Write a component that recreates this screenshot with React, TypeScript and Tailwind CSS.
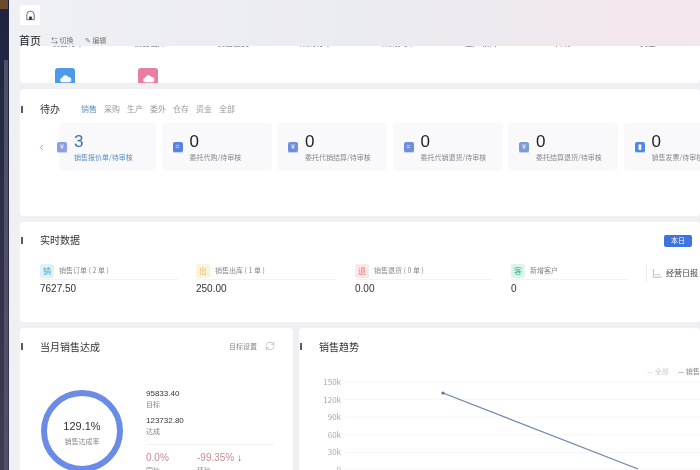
import { ChevronLeft, RefreshCw } from "lucide-react";

type Todo = { count: string; label: string; color: string; glyph: string; active?: boolean };

const todos: Todo[] = [
  { count: "3", label: "销售报价单/待审核", color: "bg-[#8b9fe0]", glyph: "¥", active: true },
  { count: "0", label: "委托代购/待审核", color: "bg-[#5b82dc]", glyph: "=" },
  { count: "0", label: "委托代销结算/待审核", color: "bg-[#6f8fdc]", glyph: "¥" },
  { count: "0", label: "委托代销退货/待审核", color: "bg-[#6f8fdc]", glyph: "=" },
  { count: "0", label: "委托结算退货/待审核", color: "bg-[#7f9ad8]", glyph: "¥" },
  { count: "0", label: "销售发票/待审核", color: "bg-[#4a8be0]", glyph: "▮" },
];

const realtime = [
  { glyph: "销", tint: "bg-[#dff1fb] text-[#4aa3c8]", label: "销售订单 ( 2 单 )", value: "7627.50", width: "w-[138px] mr-[18px]" },
  { glyph: "出", tint: "bg-[#fdf3dc] text-[#e9bc5c]", label: "销售出库 ( 1 单 )", value: "250.00", width: "w-[140px] mr-[19px]" },
  { glyph: "退", tint: "bg-[#fde8e8] text-[#e07a7a]", label: "销售退货 ( 0 单 )", value: "0.00", width: "w-[138px] mr-[18px]" },
  { glyph: "客", tint: "bg-[#dcf5ea] text-[#3fb58a]", label: "新增客户", value: "0", width: "w-[117px] mr-[18px]" },
];

const topLabels = [
  { label: "销售订单", w: "w-[82px]" },
  { label: "销售出库", w: "w-[83px]" },
  { label: "销售退货", w: "w-[83px]" },
  { label: "采购订单", w: "w-[82px]" },
  { label: "采购入库", w: "w-[83px]" },
  { label: "生产领料", w: "w-[91px]" },
  { label: "库存", w: "w-[84px]" },
  { label: "资金", w: "w-[40px]" },
];

const latin = { fontFamily: '"Liberation Sans", sans-serif' };

function Marker() {
  return <span className="absolute left-[1px] h-[7px] w-[2px] bg-[#555a66]" />;
}

function CloudTile({ color }: { color: string }) {
  return (
    <div className={`flex h-[20px] w-[20px] items-center justify-center rounded-t-[3px] ${color}`}>
      <svg viewBox="0 0 16 12" className="h-[9px] w-[13px]" fill="#fff">
        <path d="M4 11a3 3 0 0 1-.4-6A4.5 4.5 0 0 1 12 4a3.5 3.5 0 0 1 .5 7z" />
      </svg>
    </div>
  );
}

export default function App() {
  return (
    <div
      className="flex h-[470px] w-[700px] overflow-hidden bg-[#eff0f4] text-[#333] blur-[0.4px]"
      style={{ fontFamily: '"Noto Sans CJK SC", "Liberation Sans", sans-serif' }}
    >
      <aside className="relative w-[9px] shrink-0 bg-gradient-to-b from-[#1f2240] to-[#3d3e52]">
        <div className="h-[9px] w-[8px] bg-[#6b4a2c]" />
        <div className="absolute bottom-0 right-[1px] top-[60px] w-[4px] bg-[#50506a]" />
      </aside>

      <main className="min-w-0 flex-1">
        <header className="h-[46px] bg-gradient-to-r from-[#eff0f5] via-[#ebebf2] to-[#f3e6ec] pl-[11px] pt-[5px]">
          <div className="flex h-[20px] w-[20px] items-center justify-center rounded-[2px] bg-white">
            <svg viewBox="0 0 12 12" className="h-[11px] w-[11px]" fill="none" stroke="#5a6070" strokeWidth="1">
              <path d="M2 10.5V5.2a4 4 0 0 1 8 0v5.3z" />
              <rect x="4.6" y="7.2" width="2.8" height="3.3" fill="#222" stroke="none" />
            </svg>
          </div>
          <div className="mt-[8px] flex items-center">
            <span className="-ml-[1px] text-[11px] leading-[15px] text-[#222]">首页</span>
            <span className="ml-[10px] text-[7px] text-[#777]">⇆ 切换</span>
            <span className="ml-[11px] text-[7px] text-[#777]">✎ 编辑</span>
          </div>
        </header>

        <div className="flex flex-col gap-[6px] pl-[11px]">
          <section className="relative flex h-[37px] overflow-hidden rounded-b-[4px] bg-white pl-[32px]">
            {topLabels.map((t) => (
              <div key={t.label} className={`${t.w} shrink-0`}>
                <div className="mt-[-9px] h-[12px] text-[8px] leading-[12px] text-[#666]">{t.label}</div>
              </div>
            ))}
            <div className="absolute left-[35px] top-[22px]">
              <CloudTile color="bg-[#4d9be8]" />
            </div>
            <div className="absolute left-[118px] top-[22px]">
              <CloudTile color="bg-[#ea7ea0]" />
            </div>
          </section>

          <section className="relative h-[127px] overflow-hidden rounded-[4px] bg-white pt-[13px]">
            <div className="relative flex h-[14px] items-center pl-[20px]">
              <Marker />
              <span className="-mt-[2px] w-[41px] text-[10px] text-[#333]">待办</span>
              <div className="flex gap-[7px] text-[8px]">
                <span className="text-[#5b8fc0]">销售</span>
                <span className="text-[#999]">采购</span>
                <span className="text-[#999]">生产</span>
                <span className="text-[#999]">委外</span>
                <span className="text-[#999]">仓存</span>
                <span className="text-[#999]">资金</span>
                <span className="text-[#999]">全部</span>
              </div>
            </div>
            <div className="mt-[7px] flex items-center">
              <ChevronLeft size={9} className="ml-[17px] mr-[13px] shrink-0 text-[#888]" />
              <div className="flex gap-[5.5px]">
                {todos.map((t, i) => (
                  <div
                    key={t.label}
                    className={`flex h-[48px] shrink-0 items-center rounded-[4px] bg-[#f9f9fc] ${i === 0 ? "w-[97px]" : "w-[110px] pl-[11px]"}`}
                  >
                    <span
                      className={`flex h-[11px] w-[10px] shrink-0 items-center justify-center rounded-[2px] border-b border-[#c5d3f3] text-[7px] leading-none text-white ${t.color} ${i === 0 ? "-ml-[2px]" : ""}`}
                    >
                      {t.glyph}
                    </span>
                    <div className="ml-[7px]">
                      <div className={`text-[17px] leading-[20px] ${t.active ? "text-[#3f6fb5]" : "text-[#222]"}`} style={latin}>
                        {t.count}
                      </div>
                      <div className={`whitespace-nowrap text-[7px] leading-[11px] ${t.active ? "text-[#5b8fc0]" : "text-[#888]"}`}>{t.label}</div>
                    </div>
                  </div>
                ))}
              </div>
            </div>
          </section>

          <section className="relative h-[100px] overflow-hidden rounded-[4px] bg-white pt-[10px]">
            <div className="relative flex h-[16px] items-center pl-[20px] pr-[8px]">
              <Marker />
              <span className="-mt-[2px] text-[10px] text-[#333]">实时数据</span>
              <span className="ml-auto mt-[1px] flex h-[12px] w-[28px] items-center justify-center rounded-[2px] bg-[#3f74dc] text-[7px] text-white">本日</span>
            </div>
            <div className="mt-[16px] flex pl-[20px]">
              {realtime.map((r) => (
                <div key={r.label} className={`${r.width} shrink-0`}>
                  <div className="flex h-[16px] items-center border-b border-[#f2f2f4] pb-[2px]">
                    <span className={`flex h-[14px] w-[14px] items-center justify-center rounded-[2px] text-[8px] ${r.tint}`}>{r.glyph}</span>
                    <span className="ml-[5px] text-[7px] text-[#888]">{r.label}</span>
                  </div>
                  <div className="mt-[2px] text-[10px] leading-[14px] text-[#333]" style={latin}>
                    {r.value}
                  </div>
                </div>
              ))}
              <div className="flex h-[18px] shrink-0 items-center gap-[3px] whitespace-nowrap border-l border-[#eee] pl-[5px] text-[8px] text-[#444]">
                <svg viewBox="0 0 12 12" className="h-[10px] w-[11px]" fill="none" stroke="#999" strokeWidth="0.8">
                  <path d="M1 1v10h10M3 8h2M6 8h3" />
                </svg>
                经营日报
              </div>
            </div>
          </section>

          <div className="flex gap-[6px]">
            <section className="relative h-[160px] w-[273px] shrink-0 rounded-[4px] bg-white pt-[10px]">
              <div className="relative flex h-[16px] items-center pl-[20px] pr-[18px]">
                <Marker />
                <span className="text-[10px] text-[#333]">当月销售达成</span>
                <span className="ml-auto text-[7px] text-[#888]">目标设置</span>
                <RefreshCw size={10} className="ml-[8px] text-[#bbb]" />
              </div>
              <div className="mt-[36px] flex pl-[21px]">
                <div className="flex h-[82px] w-[82px] shrink-0 flex-col items-center justify-center rounded-full border-[6px] border-[#6a8be6] pt-[2px]">
                  <span className="text-[11px] leading-[14px] text-[#333]" style={latin}>129.1%</span>
                  <span className="mt-[3px] text-[7px] leading-[10px] text-[#888]">销售达成率</span>
                </div>
                <div className="-mt-[2px] ml-[23px] w-[128px]">
                  <div className="text-[8px] leading-[11px] text-[#333]" style={latin}>95833.40</div>
                  <div className="text-[7px] leading-[10px] text-[#888]">目标</div>
                  <div className="mt-[6px] text-[8px] leading-[11px] text-[#333]" style={latin}>123732.80</div>
                  <div className="text-[7px] leading-[10px] text-[#888]">达成</div>
                  <div className="mt-[8px] flex border-t border-[#f2f2f4] pt-[6px]">
                    <div className="w-[51px]">
                      <div className="text-[10px] leading-[14px] text-[#c98a96]" style={latin}>0.0%</div>
                      <div className="text-[7px] leading-[10px] text-[#888]">同比</div>
                    </div>
                    <div>
                      <div className="text-[10px] leading-[14px] text-[#c98a96]" style={latin}>
                        -99.35% <span className="text-[#b5485c]">↓</span>
                      </div>
                      <div className="text-[7px] leading-[10px] text-[#888]">环比</div>
                    </div>
                  </div>
                </div>
              </div>
            </section>

            <section className="relative h-[160px] min-w-0 flex-1 overflow-hidden rounded-[4px] bg-white pt-[10px]">
              <div className="relative flex h-[16px] items-center pl-[20px]">
                <Marker />
                <span className="text-[10px] text-[#333]">销售趋势</span>
              </div>
              <div className="ml-[348px] flex gap-[9px] whitespace-nowrap pt-[12px] text-[7px] leading-[10px]">
                <span className="text-[#ccc]">— 全部</span>
                <span className="text-[#888]"><span className="text-[#5a6f9c]">—</span> 销售</span>
              </div>
              <svg viewBox="0 0 401 100" className="absolute left-0 top-[44px] h-[100px] w-[401px]" fill="none">
                {[0, 1, 2, 3, 4, 5].map((i) => (
                  <line key={i} x1="46" x2="401" y1={10 + i * 17.6} y2={10 + i * 17.6} stroke="#f5f5f7" strokeWidth="1" />
                ))}
                {["150k", "120k", "90k", "60k", "30k", "0"].map((l, i) => (
                  <text key={l} x="42" y={13 + i * 17.6} textAnchor="end" fontSize="8" fill="#aaa">
                    {l}
                  </text>
                ))}
                <path d="M144 21 L339 97" stroke="#6a7fae" strokeWidth="1.2" />
                <circle cx="144" cy="21" r="1.6" fill="#5a6f9c" />
              </svg>
            </section>
          </div>
        </div>
      </main>
    </div>
  );
}
